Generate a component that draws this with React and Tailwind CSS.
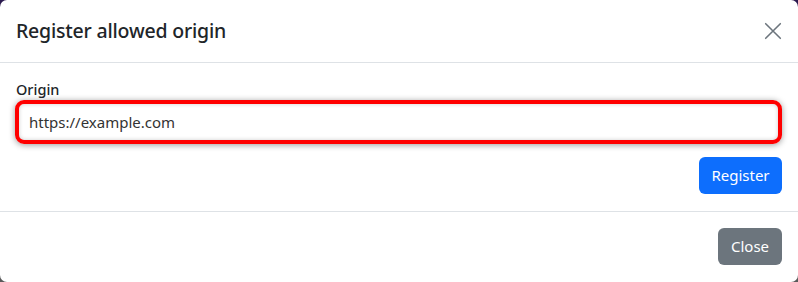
import React from "react";

function App() {
  return (
    <div className="w-[798px] h-[282px] bg-gradient-to-b from-[#2b1a4f] to-[#5a5a5a]" style={{ fontFamily: '"Noto Sans", "Open Sans", sans-serif' }}>
      <div className="w-full h-full bg-white rounded-[7px] flex flex-col text-[#212529]">
        <div className="h-[63px] px-4 flex items-center justify-between border-b border-[#dee2e6]">
          <h5 className="text-[19.5px] font-medium tracking-[-0.2px]">Register allowed origin</h5>
          <button className="w-[18px] h-[18px] text-[#6c757d] flex items-center justify-center">
            <svg viewBox="0 0 16 16" width="18" height="18" fill="none" stroke="currentColor" strokeWidth="1.4" strokeLinecap="round">
              <path d="M1.5 1.5l13 13M14.5 1.5l-13 13" />
            </svg>
          </button>
        </div>
        <div className="px-4 pt-[16px] pb-[17px] flex flex-col border-b border-[#dee2e6]">
          <label className="text-[14.5px] font-medium leading-[21px]">Origin</label>
          <div className="h-[44px] -ml-[1px] border-[4px] border-[#ff0000] rounded-[9px] flex items-center pl-[10px] shadow-[inset_0_0_4px_rgba(0,0,0,0.2),0_1px_6px_rgba(0,0,0,0.4)]">
            <span className="text-[15px] text-[#333]">https://example.com</span>
          </div>
          <div className="flex justify-end mt-[13px]">
            <button className="h-[37px] w-[83px] bg-[#0d6efd] text-white rounded-[6px] text-[15px]">Register</button>
          </div>
        </div>
        <div className="flex-1 flex items-start justify-end px-4 pt-[16px]">
          <button className="h-[37px] w-[64px] bg-[#6c757d] text-white rounded-[6px] text-[15px]">Close</button>
        </div>
      </div>
    </div>
  );
}

export default App;
